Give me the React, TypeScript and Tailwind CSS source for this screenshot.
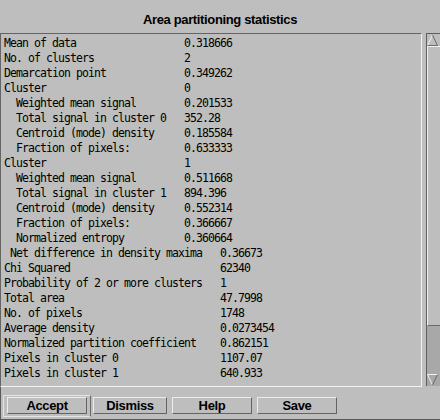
import React from 'react';

interface Row {
  label: string;
  value: string;
  wide?: boolean;
}

const rows: Row[] = [
  { label: 'Mean of data', value: '0.318666' },
  { label: 'No. of clusters', value: '2' },
  { label: 'Demarcation point', value: '0.349262' },
  { label: 'Cluster', value: '0' },
  { label: '  Weighted mean signal', value: '0.201533' },
  { label: '  Total signal in cluster 0', value: '352.28' },
  { label: '  Centroid (mode) density', value: '0.185584' },
  { label: '  Fraction of pixels:', value: '0.633333' },
  { label: 'Cluster', value: '1' },
  { label: '  Weighted mean signal', value: '0.511668' },
  { label: '  Total signal in cluster 1', value: '894.396' },
  { label: '  Centroid (mode) density', value: '0.552314' },
  { label: '  Fraction of pixels:', value: '0.366667' },
  { label: '  Normalized entropy', value: '0.360664' },
  { label: ' Net difference in density maxima', value: '0.36673', wide: true },
  { label: 'Chi Squared', value: '62340', wide: true },
  { label: 'Probability of 2 or more clusters', value: '1', wide: true },
  { label: 'Total area', value: '47.7998', wide: true },
  { label: 'No. of pixels', value: '1748', wide: true },
  { label: 'Average density', value: '0.0273454', wide: true },
  { label: 'Normalized partition coefficient', value: '0.862151', wide: true },
  { label: 'Pixels in cluster 0', value: '1107.07', wide: true },
  { label: 'Pixels in cluster 1', value: '640.933', wide: true },
];

const mono = "font-['DejaVu_Sans_Mono','Liberation_Mono',monospace] text-[11.5px] tracking-[-0.92px]";
const bold = "font-['Liberation_Sans',Arial,sans-serif] font-bold text-[13px] tracking-[-0.35px]";

function Button({ label, width }: { label: string; width: string }) {
  return (
    <div
      className={`${width} h-[17px] flex items-center justify-center border-t border-l border-t-[#ececec] border-l-[#ececec] border-b border-r border-b-[#646464] border-r-[#646464] text-black leading-[14px] ${bold}`}
    >
      {label}
    </div>
  );
}

function ArrowUp() {
  return (
    <svg width="11" height="12" viewBox="0 0 11 12" className="block">
      <line x1="5.5" y1="1" x2="0.5" y2="11.5" stroke="#f2f2f2" strokeWidth="1" />
      <line x1="5.5" y1="1" x2="10.5" y2="11.5" stroke="#6a6a6a" strokeWidth="1" />
      <line x1="0.5" y1="11.5" x2="10.5" y2="11.5" stroke="#6a6a6a" strokeWidth="1" />
    </svg>
  );
}

function ArrowDown() {
  return (
    <svg width="11" height="12" viewBox="0 0 11 12" className="block">
      <line x1="0.5" y1="0.5" x2="10.5" y2="0.5" stroke="#f2f2f2" strokeWidth="1" />
      <line x1="0.5" y1="0.5" x2="5.5" y2="11" stroke="#f2f2f2" strokeWidth="1" />
      <line x1="10.5" y1="0.5" x2="5.5" y2="11" stroke="#6a6a6a" strokeWidth="1" />
    </svg>
  );
}

export default function App() {
  return (
    <div className="w-[440px] h-[420px] bg-[#bebebe] overflow-hidden flex flex-col text-black">
      {/* Title */}
      <div className={`h-[33px] pt-[12px] text-center leading-[15px] ${bold}`}>
        Area partitioning statistics
      </div>

      {/* Text panel + scrollbar */}
      <div className="flex h-[354px]">
        <div className="w-[424px] h-[354px] border-t border-l border-t-[#646464] border-l-[#646464] border-b border-r border-b-[#f2f2f2] border-r-[#f2f2f2] pl-[3px] pt-[2px]">
          {rows.map((r, i) => (
            <div key={i} className={`flex h-[15px] leading-[15px] whitespace-pre ${mono}`}>
              <span className={r.wide ? 'w-[216px] shrink-0' : 'w-[180px] shrink-0'}>{r.label}</span>
              <span>{r.value}</span>
            </div>
          ))}
        </div>
        <div className="ml-[4px] w-[14px] h-[353px] shrink-0 border-t border-l border-[#5e5e5e] flex flex-col">
          <ArrowUp />
          <div className="h-[280px] bg-[#bebebe] border-t border-l border-t-[#f2f2f2] border-l-[#f2f2f2] border-b border-b-[#6a6a6a]" />
          <div className="flex-1 bg-[#a8a8a8]" />
          <div className="bg-[#a8a8a8]">
            <ArrowDown />
          </div>
        </div>
      </div>

      {/* Buttons */}
      <div className="flex-1 flex items-start pl-[2px] border-b border-b-[#5a5a5a] border-l border-l-[#5a5a5a]">
        <div className="mt-[8px] w-[88px] h-[22px] border border-[#e4e4e4] border-r-[#6a6a6a] pl-[3px] pt-[1px]">
          <Button label="Accept" width="w-[80px]" />
        </div>
        <div className="mt-[10px] ml-[2px]">
          <Button label="Dismiss" width="w-[74px]" />
        </div>
        <div className="mt-[10px] ml-[5px]">
          <Button label="Help" width="w-[80px]" />
        </div>
        <div className="mt-[10px] ml-[5px]">
          <Button label="Save" width="w-[80px]" />
        </div>
      </div>
    </div>
  );
}
